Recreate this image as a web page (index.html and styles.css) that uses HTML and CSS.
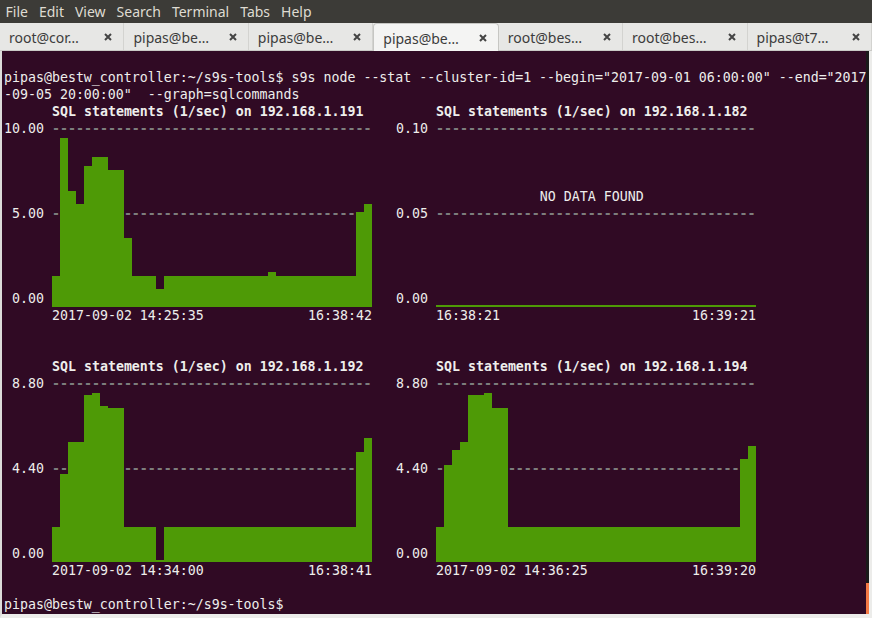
FILE: index.html
```html
<!DOCTYPE html>
<html>
<head>
<meta charset="utf-8">
<link rel="stylesheet" href="styles.css">
</head>
<body>
<div class="window">
  <div class="menubar">
    <span class="menu">File</span>
    <span class="menu">Edit</span>
    <span class="menu">View</span>
    <span class="menu">Search</span>
    <span class="menu">Terminal</span>
    <span class="menu">Tabs</span>
    <span class="menu">Help</span>
  </div>
  <div class="tabbar">
    <div class="tab"><span class="tab-label">root@cor…</span><svg class="close" viewBox="0 0 8 8"><path d="M1 1L7 7M7 1L1 7"/></svg></div>
    <div class="tab"><span class="tab-label">pipas@be…</span><svg class="close" viewBox="0 0 8 8"><path d="M1 1L7 7M7 1L1 7"/></svg></div>
    <div class="tab"><span class="tab-label">pipas@be…</span><svg class="close" viewBox="0 0 8 8"><path d="M1 1L7 7M7 1L1 7"/></svg></div>
    <div class="tab active"><span class="tab-label">pipas@be…</span><svg class="close" viewBox="0 0 8 8"><path d="M1 1L7 7M7 1L1 7"/></svg></div>
    <div class="tab"><span class="tab-label">root@bes…</span><svg class="close" viewBox="0 0 8 8"><path d="M1 1L7 7M7 1L1 7"/></svg></div>
    <div class="tab"><span class="tab-label">root@bes…</span><svg class="close" viewBox="0 0 8 8"><path d="M1 1L7 7M7 1L1 7"/></svg></div>
    <div class="tab"><span class="tab-label">pipas@t7…</span><svg class="close" viewBox="0 0 8 8"><path d="M1 1L7 7M7 1L1 7"/></svg></div>
  </div>
  <div class="main">
    <div class="terminal">
      <div class="line">pipas@bestw_controller:~/s9s-tools$ s9s node --stat --cluster-id=1 --begin="2017-09-01 06:00:00" --end="2017</div>
      <div class="line">-09-05 20:00:00"  --graph=sqlcommands</div>

      <div class="chart-row">
        <div class="chart">
          <div class="title">SQL statements (1/sec) on 192.168.1.191</div>
          <div class="chart-body">
            <div class="axis">10.00




 5.00




 0.00</div>
            <div class="plot">
              <div class="guides">----------------------------------------




----------------------------------------</div>
              <div class="bars">
                <div class="bar" style="height:31px;width:8px"></div>
                <div class="bar" style="height:169px;width:8px"></div>
                <div class="bar" style="height:116px;width:8px"></div>
                <div class="bar" style="height:103px;width:8px"></div>
                <div class="bar" style="height:141px;width:8px"></div>
                <div class="bar" style="height:150px;width:16px"></div>
                <div class="bar" style="height:137px;width:16px"></div>
                <div class="bar" style="height:69px;width:8px"></div>
                <div class="bar" style="height:31px;width:24px"></div>
                <div class="bar" style="height:18px;width:8px"></div>
                <div class="bar" style="height:31px;width:104px"></div>
                <div class="bar" style="height:35px;width:8px"></div>
                <div class="bar" style="height:31px;width:80px"></div>
                <div class="bar" style="height:95px;width:8px"></div>
                <div class="bar" style="height:103px;width:8px"></div>
              </div>
            </div>
          </div>
          <div class="xaxis"><span>2017-09-02 14:25:35</span><span>16:38:42</span></div>
        </div>

        <div class="chart">
          <div class="title">SQL statements (1/sec) on 192.168.1.182</div>
          <div class="chart-body">
            <div class="axis">0.10




0.05




0.00</div>
            <div class="plot">
              <div class="guides">----------------------------------------



<span class="nodata">             NO DATA FOUND</span>
----------------------------------------</div>
              <div class="bars">
                <div class="bar" style="height:2px;width:320px"></div>
              </div>
            </div>
          </div>
          <div class="xaxis"><span>16:38:21</span><span>16:39:21</span></div>
        </div>
      </div>

      <div class="line"> </div>
      <div class="line"> </div>

      <div class="chart-row">
        <div class="chart">
          <div class="title">SQL statements (1/sec) on 192.168.1.192</div>
          <div class="chart-body">
            <div class="axis">8.80




4.40




0.00</div>
            <div class="plot">
              <div class="guides">----------------------------------------




----------------------------------------</div>
              <div class="bars">
                <div class="bar" style="height:35px;width:8px"></div>
                <div class="bar" style="height:88px;width:8px"></div>
                <div class="bar" style="height:120px;width:16px"></div>
                <div class="bar" style="height:167px;width:8px"></div>
                <div class="bar" style="height:169px;width:8px"></div>
                <div class="bar" style="height:156px;width:8px"></div>
                <div class="bar" style="height:154px;width:16px"></div>
                <div class="bar" style="height:35px;width:32px"></div>
                <div class="bar" style="height:2px;width:8px"></div>
                <div class="bar" style="height:35px;width:192px"></div>
                <div class="bar" style="height:110px;width:8px"></div>
                <div class="bar" style="height:124px;width:8px"></div>
              </div>
            </div>
          </div>
          <div class="xaxis"><span>2017-09-02 14:34:00</span><span>16:38:41</span></div>
        </div>

        <div class="chart">
          <div class="title">SQL statements (1/sec) on 192.168.1.194</div>
          <div class="chart-body">
            <div class="axis">8.80




4.40




0.00</div>
            <div class="plot">
              <div class="guides">----------------------------------------




----------------------------------------</div>
              <div class="bars">
                <div class="bar" style="height:35px;width:8px"></div>
                <div class="bar" style="height:97px;width:8px"></div>
                <div class="bar" style="height:112px;width:8px"></div>
                <div class="bar" style="height:120px;width:8px"></div>
                <div class="bar" style="height:167px;width:16px"></div>
                <div class="bar" style="height:169px;width:8px"></div>
                <div class="bar" style="height:154px;width:16px"></div>
                <div class="bar" style="height:35px;width:232px"></div>
                <div class="bar" style="height:103px;width:8px"></div>
                <div class="bar" style="height:116px;width:8px"></div>
              </div>
            </div>
          </div>
          <div class="xaxis"><span>2017-09-02 14:36:25</span><span>16:39:20</span></div>
        </div>
      </div>

      <div class="line"> </div>
      <div class="line">pipas@bestw_controller:~/s9s-tools$</div>
    </div>
    <div class="scrollbar"><div class="thumb"></div></div>
  </div>
</div>
</body>
</html>
```

FILE: styles.css
```css
* { box-sizing: border-box; }
html, body { margin: 0; padding: 0; }
body { width: 872px; height: 618px; overflow: hidden; background: #e8e8e6; }

.window { display: flex; flex-direction: column; width: 872px; height: 618px; }

.menubar {
  height: 23px;
  background: #3c3b37;
  display: flex;
  align-items: center;
  padding-left: 0;
  font-family: "Noto Sans", "DejaVu Sans", sans-serif;
  font-size: 14px;
  color: #dfdbd2;
}
.menu { padding: 0 5.5px; line-height: 23px; }

.tabbar {
  height: 28px;
  display: flex;
  background: #e7e7e5;
  border-bottom: 1px solid #c9c9c6;
  font-family: "Noto Sans", "DejaVu Sans", sans-serif;
  font-size: 14px;
  color: #3c3c3c;
}
.tab {
  flex: 1 1 0;
  display: flex;
  align-items: center;
  justify-content: space-between;
  padding: 1px 11px 0 9px;
  border-right: 1px solid #d3d3d0;
}
.tab.active {
  background: #f4f4f3;
  border: 1px solid #c6c6c3;
  border-bottom: none;
  border-radius: 4px 4px 0 0;
  margin-bottom: -1px;
}
.tab-label { white-space: nowrap; }
.close { width: 8px; height: 8px; }
.close path { stroke: #444; stroke-width: 2; fill: none; }

.main {
  flex: 1;
  display: flex;
  border-left: 2px solid #dcdcda;
  border-right: 3px solid #ececea;
  border-bottom: 4px solid #ececea;
  min-height: 0;
}
.terminal {
  flex: 1;
  background: #300a24;
  color: #eeeeec;
  font-family: "DejaVu Sans Mono", monospace;
  font-size: 13.28px;
  line-height: 17px;
  padding: 18px 0 0 2px;
  overflow: hidden;
}
.scrollbar {
  width: 3px;
  background: #1a1a1a;
  display: flex;
  flex-direction: column;
  justify-content: flex-end;
}
.thumb { height: 31px; background: #f47a45; }

.line { height: 17px; white-space: pre; }

.chart-row { display: flex; gap: 16px; }
.chart { width: 368px; flex: none; }
.title { height: 17px; padding-left: 48px; font-weight: bold; white-space: pre; }
.chart-body { display: flex; height: 187px; }
.axis { width: 48px; flex: none; padding-right: 8px; text-align: right; white-space: pre; }
.plot { display: grid; width: 320px; height: 187px; flex: none; }
.guides, .bars { grid-area: 1 / 1; }
.guides { color: #7d7d7d; font-weight: bold; white-space: pre; }
.nodata { color: #eeeeec; font-weight: normal; }
.bars { display: flex; align-items: flex-end; }
.bar { background: #4e9a06; flex: none; }
.xaxis { display: flex; justify-content: space-between; height: 17px; margin-left: 48px; width: 320px; white-space: pre; }
```
